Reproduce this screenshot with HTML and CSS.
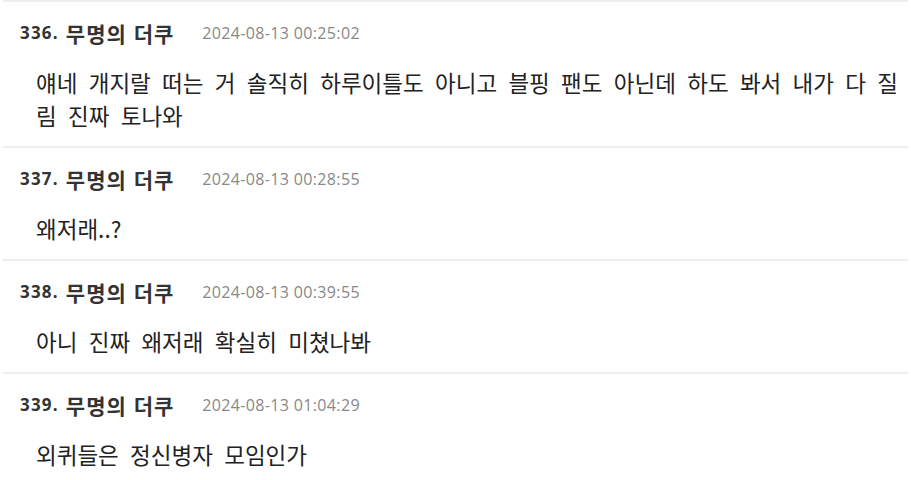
FILE: index.html
```html
<!DOCTYPE html>
<html lang="ko">
<head>
<meta charset="utf-8">
<link rel="stylesheet" href="styles.css">
</head>
<body>
<div class="list">
  <div class="item">
    <div class="head"><span class="num">336.</span><span class="name">무명의 더쿠</span><span class="date">2024-08-13 00:25:02</span></div>
    <div class="body">얘네 개지랄 떠는 거 솔직히 하루이틀도 아니고 블핑 팬도 아닌데 하도 봐서 내가 다 질림 진짜 토나와</div>
  </div>
  <div class="item">
    <div class="head"><span class="num">337.</span><span class="name">무명의 더쿠</span><span class="date">2024-08-13 00:28:55</span></div>
    <div class="body">왜저래..?</div>
  </div>
  <div class="item">
    <div class="head"><span class="num">338.</span><span class="name">무명의 더쿠</span><span class="date">2024-08-13 00:39:55</span></div>
    <div class="body">아니 진짜 왜저래 확실히 미쳤나봐</div>
  </div>
  <div class="item">
    <div class="head"><span class="num">339.</span><span class="name">무명의 더쿠</span><span class="date">2024-08-13 01:04:29</span></div>
    <div class="body">외퀴들은 정신병자 모임인가</div>
  </div>
</div>
</body>
</html>
```
FILE: styles.css
```css
html, body {
  margin: 0;
  padding: 0;
  background: #fff;
}
body {
  font-family: "Noto Sans CJK KR", "Open Sans", sans-serif;
  color: #333;
}
.list {
  margin: 0 3px;
  width: 905px;
}
.item {
  border-top: 2px solid #eeeeee;
  padding: 16px 0 14px 17px;
}
.head {
  display: flex;
  align-items: center;
  height: 30px;
  line-height: 30px;
}
.num {
  font-family: "Open Sans", sans-serif;
  font-weight: 700;
  font-size: 17px;
  letter-spacing: 1.2px;
  color: #333;
  margin-right: 7px;
}
.name {
  font-weight: 700;
  font-size: 21px;
  letter-spacing: 1px;
  color: #333;
}
.date {
  font-family: "Open Sans", sans-serif;
  font-size: 16px;
  letter-spacing: 0.35px;
  color: #888;
  margin-left: 28px;
}
.body {
  margin-top: 18px;
  padding-left: 16px;
  padding-right: 8px;
  font-size: 22.5px;
  line-height: 33px;
  word-spacing: 5px;
  color: #222;
}
```
